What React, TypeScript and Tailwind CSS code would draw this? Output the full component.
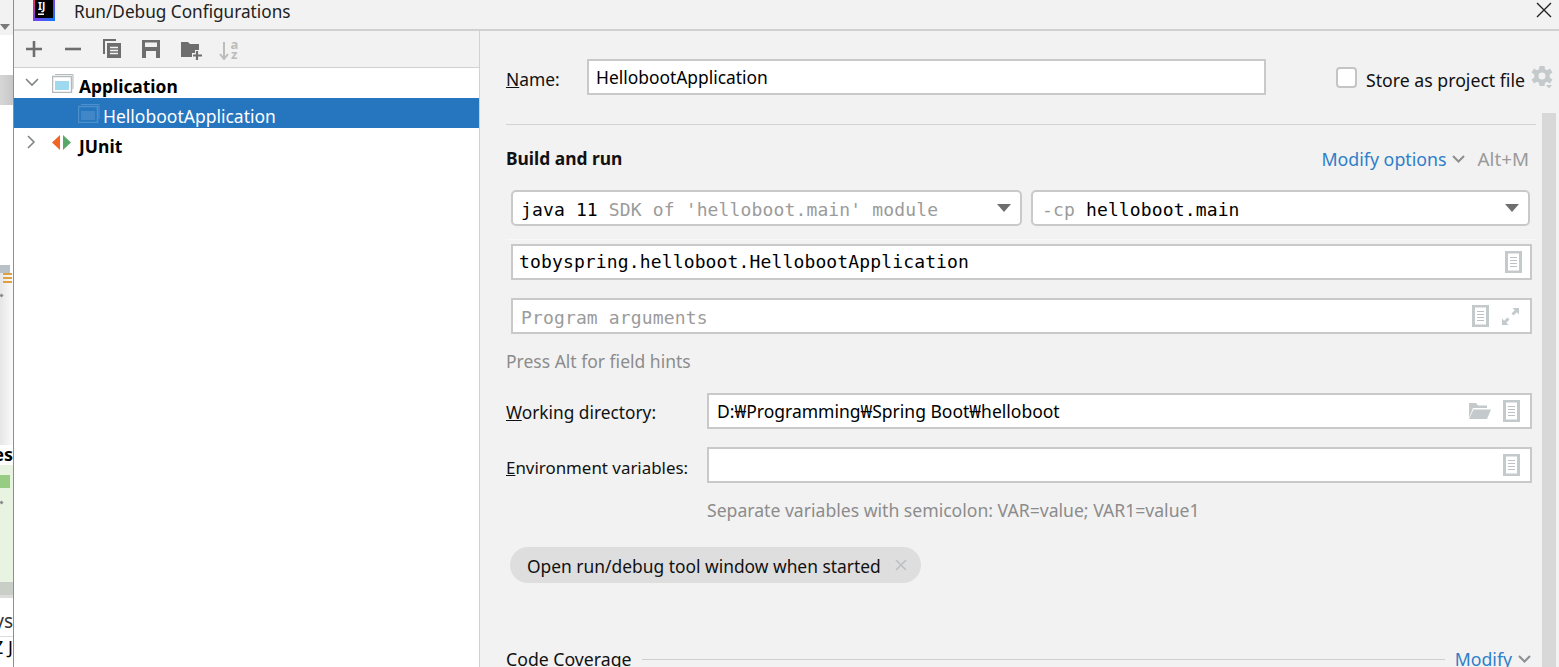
import React from "react";

const SANS = "font-['Noto_Sans','Open_Sans',sans-serif]";

function DocIcon() {
  return (
    <svg width="17" height="22" viewBox="0 0 17 22" className="shrink-0">
      <rect x="0" y="0" width="17" height="22" fill="#c4c9cc" />
      <rect x="3" y="2.5" width="11" height="17" fill="#fff" />
      <path d="M5 6.5h7M5 9.5h7M5 12.5h7M5 15.5h7" stroke="#bcc1c4" strokeWidth="1.2" />
    </svg>
  );
}

function Expand() {
  return (
    <svg width="19" height="19" viewBox="0 0 19 19" className="shrink-0">
      <path d="M1 18V11.5L3.2 13.7 6.5 10.5 8.5 12.5 5.3 15.8 7.5 18Z" fill="#c4c9cc" />
      <path d="M18 1V7.5L15.8 5.3 12.5 8.5 10.5 6.5 13.7 3.2 11.5 1Z" fill="#c4c9cc" />
    </svg>
  );
}

function Folder() {
  return (
    <svg width="23" height="18" viewBox="0 0 23 18" className="shrink-0">
      <path d="M1 16V1H8L10 3.5H19V6H5Z" fill="#c4c9cc" />
      <path d="M5.5 7.5H23L19 17H1Z" fill="#c4c9cc" />
    </svg>
  );
}

function Triangle() {
  return (
    <svg width="14" height="8" viewBox="0 0 14 8" className="shrink-0">
      <path d="M0 0H14L7 8Z" fill="#6e6e6e" />
    </svg>
  );
}

function Chevron({ color = "#8c8f91" }: { color?: string }) {
  return (
    <svg width="13" height="8" viewBox="0 0 13 8" className="shrink-0">
      <path d="M1 1L6.5 6.5 12 1" fill="none" stroke={color} strokeWidth="2" />
    </svg>
  );
}

function AppIcon({ dim = false }: { dim?: boolean }) {
  const edge = dim ? "#4d8fcb" : "#b4b9bc";
  const fill = dim ? "#4187c8" : "#9ed9f0";
  return (
    <svg width="22" height="20" viewBox="0 0 22 20" className="shrink-0">
      <path d="M3 1.5H21V16" fill="none" stroke={edge} strokeWidth="1" />
      <rect x="0.5" y="3.5" width="19" height="16" fill={dim ? "none" : "#fff"} stroke={edge} strokeWidth="1.5" />
      <rect x="3" y="8" width="14" height="9" fill={fill} />
    </svg>
  );
}

function LeftStrip() {
  return (
    <div className="w-[13px] h-[667px] shrink-0 flex flex-col overflow-hidden bg-[#f0f0f0]">
      <div className="h-[35px] bg-[#f2f2f2] flex items-end justify-start pb-[5px]">
        <div className="w-[10px] h-[6px] bg-[#7a7a7a] [clip-path:polygon(0_0,100%_0,50%_100%)]" />
      </div>
      <div className="h-[40px] bg-white" />
      <div className="h-[30px] bg-gradient-to-r from-[#d6d6d6] to-[#c8c8c8]" />
      <div className="h-[160px] bg-white" />
      <div className="h-[8px] bg-white">
        <div className="h-full w-[10px] bg-[#b9c1c8]" />
      </div>
      <div className="h-[172px] bg-gradient-to-r from-[#e6e6e6] to-[#fbfbfb] flex flex-col">
        <div className="flex flex-col gap-[2px] self-end mr-[1px]">
          <div className="w-[9px] h-[2px] bg-[#e0a040]" />
          <div className="w-[9px] h-[2px] bg-[#e0a040]" />
          <div className="w-[9px] h-[2px] bg-[#e0a040]" />
        </div>
        <div className="mt-[11px] w-[3px] h-[3px] bg-[#8a8a8a] rotate-45" />
      </div>
      <div className="h-[20px] bg-white font-['Noto_Sans',sans-serif] font-bold text-[18px] leading-[18px] text-black flex justify-end whitespace-nowrap">
        es
      </div>
      <div className="h-[117px] bg-[#e8f3e2] flex flex-col">
        <div className="mt-[10px] h-[13px] w-[10px] bg-[#97cc83]" />
        <div className="mt-[13px] w-[3px] h-[3px] bg-[#8a8a8a] rotate-45" />
      </div>
      <div className="h-[13px] bg-[#c9cec6]" />
      <div className="h-[3px] bg-[#dcdcdc]" />
      <div className="h-[12px] bg-white" />
      <div className="h-[27px] bg-white text-[19px] leading-[22px] text-[#333] font-['Noto_Sans',sans-serif] flex justify-end whitespace-nowrap border-b border-[#ddd]">
        ys
      </div>
      <div className="h-[30px] bg-white text-[18px] leading-[20px] text-black font-['Noto_Sans',sans-serif] flex justify-end whitespace-nowrap">
        Z J
      </div>
    </div>
  );
}

function Toolbar() {
  const c = "#6e6e6e";
  return (
    <div className="h-[37px] shrink-0 flex items-center pl-[12px] border-b border-[#d1d1d1] bg-[#f2f2f2]">
      <svg width="16" height="16" viewBox="0 0 16 16" className="shrink-0"><path d="M8 0V16M0 8H16" stroke={c} strokeWidth="2.6" /></svg>
      <svg width="16" height="16" viewBox="0 0 16 16" className="shrink-0 ml-[23px]"><path d="M0 8H16" stroke={c} strokeWidth="2.6" /></svg>
      <svg width="18" height="20" viewBox="0 0 18 20" className="shrink-0 ml-[22px]">
        <path d="M1 15V1H13" fill="none" stroke={c} strokeWidth="2" />
        <rect x="4" y="4" width="14" height="15" fill={c} />
        <path d="M7 8.5H15M7 11.5H15M7 14.5H15" stroke="#f2f2f2" strokeWidth="1.3" />
      </svg>
      <svg width="18" height="18" viewBox="0 0 18 18" className="shrink-0 ml-[21px]">
        <path fillRule="evenodd" d="M0 0H18V18H0ZM3 2.5V7H15V2.5ZM4 11V18H14V11Z" fill={c} />
      </svg>
      <svg width="21" height="20" viewBox="0 0 21 20" className="shrink-0 ml-[21px] mt-[2px]">
        <path d="M0 2H7L9 4H18V10H14V13H11V17H0Z" fill={c} />
        <path d="M16 11V20M12 15.5H21" stroke={c} strokeWidth="2.2" />
      </svg>
      <svg width="20" height="21" viewBox="0 0 20 21" className="shrink-0 ml-[17px]">
        <path d="M5 3V20M1 15L5 20 9 15" fill="none" stroke="#bcbcbc" strokeWidth="2" />
        <text x="11.5" y="9.5" fontSize="13" fontWeight="700" fill="#bcbcbc" fontFamily="Noto Sans">a</text>
        <text x="12" y="20" fontSize="13" fontWeight="700" fill="#bcbcbc" fontFamily="Noto Sans">z</text>
      </svg>
    </div>
  );
}

function Sidebar() {
  return (
    <div className="w-[466px] shrink-0 flex flex-col border-r border-[#d1d1d1] bg-white">
      <Toolbar />
      <div className="flex-1 flex flex-col bg-white">
        <div className="h-[30px] flex items-center">
          <svg width="14" height="9" viewBox="0 0 14 9" className="ml-[11px] mb-[2px] shrink-0"><path d="M1 1L7 7 13 1" fill="none" stroke="#7f8486" strokeWidth="1.6" /></svg>
          <span className="ml-[13px] mb-[1px]"><AppIcon /></span>
          <span className="ml-[5px] mt-[6px] text-[17.4px] font-bold text-black">Application</span>
        </div>
        <div className="h-[30px] flex items-center bg-[#2675bf]">
          <span className="ml-[64px] mb-[1px]"><AppIcon dim /></span>
          <span className="ml-[3px] mt-[6px] text-[17.5px] text-white">HellobootApplication</span>
        </div>
        <div className="h-[30px] flex items-center">
          <svg width="9" height="14" viewBox="0 0 9 14" className="ml-[13px] mb-[2px] shrink-0"><path d="M1 1L7 7 1 13" fill="none" stroke="#7f8486" strokeWidth="1.6" /></svg>
          <span className="ml-[16px] mb-[1px]">
            <svg width="19" height="15" viewBox="0 0 19 15"><path d="M8 0V15L0 7.5Z" fill="#f26522" /><path d="M11 0V15L19 7.5Z" fill="#59a869" /></svg>
          </span>
          <span className="ml-[8px] mt-[6px] text-[17.5px] font-bold text-black">JUnit</span>
        </div>
      </div>
    </div>
  );
}

function Field({ children, className = "" }: { children?: React.ReactNode; className?: string }) {
  return (
    <div className={`h-[36px] bg-white border-2 border-[#c9c9c9] flex items-center ${className}`}>{children}</div>
  );
}

const MONO = "font-['DejaVu_Sans_Mono',monospace] text-[18px] tracking-[0.14px] whitespace-pre";

function Form() {
  return (
    <div className="flex-1 min-w-0 flex flex-col bg-[#f2f2f2]">
      <div className="h-[64px] shrink-0 flex items-end pl-[26px]">
        <div className="h-[36px] flex items-center w-full">
          <span className="w-[81px] pt-[4px] text-[17.4px] text-[#111]"><u>N</u>ame:</span>
          <div className="w-[679px] h-[36px] bg-white border-2 border-[#c9c9c9] flex items-center pl-[7px] pt-[1px] text-[17.4px] text-black">HellobootApplication</div>
          <div className="ml-[70px] w-[21px] h-[21px] bg-white border-2 border-[#c4c4c4] rounded-[4px]" />
          <span className="ml-[9px] pt-[6px] text-[17.7px] text-[#111] whitespace-nowrap">Store as project file</span>
          <svg width="22" height="24" viewBox="0 0 22 24" className="ml-[6px]">
            <path fillRule="evenodd" d="M8.5 1H13.5L14 4.2 16.2 5.2 19 3.6 21.4 7.6 18.7 9.5V12.5L21.4 14.4 19 18.4 16.2 16.8 14 17.8 13.5 21H8.5L8 17.8 5.8 16.8 3 18.4.6 14.4 3.3 12.5V9.5L.6 7.6 3 3.6 5.8 5.2 8 4.2ZM11 7.5A3.5 3.5 0 1 0 11 14.5 3.5 3.5 0 0 0 11 7.5Z" fill="#c4c9cc" />
            <path d="M15 20H21L18 23.5Z" fill="#c4c9cc" />
          </svg>
        </div>
      </div>
      <div className="flex-1 min-h-0 flex">
        <div className="flex-1 min-w-0 flex flex-col pl-[26px] pr-[6px]">
          <div className="h-[29px] shrink-0" />
          <div className="h-[1px] shrink-0 bg-[#d3d3d3]" />
          <div className="h-[28px] shrink-0 mt-[20px] flex items-center">
            <span className="pb-[2px] text-[17.4px] font-bold text-[#111]">Build and run</span>
            <span className="ml-auto text-[17.8px] text-[#2f7ec9]">Modify options</span>
            <span className="ml-[5px]"><Chevron /></span>
            <span className="ml-[13px] mr-[7px] text-[18.8px] text-[#9a9a9a]">Alt+M</span>
          </div>
          <div className="h-[36px] shrink-0 mt-[17px] ml-[5px] mr-[6px] flex gap-[9px]">
            <div className="w-[511px] h-[36px] bg-white border-2 border-[#c9c9c9] rounded-[5px] flex items-center pl-[8px] pr-[9px]">
              <span className={`${MONO} pt-[2px]`}><span className="text-black">java 11</span><span className="text-[#9b9b9b]"> SDK of 'helloboot.main' module</span></span>
              <span className="ml-auto"><Triangle /></span>
            </div>
            <div className="flex-1 h-[36px] bg-white border-2 border-[#c9c9c9] rounded-[5px] flex items-center pl-[9px] pr-[9px]">
              <span className={`${MONO} pt-[2px]`}><span className="text-[#9b9b9b]">-cp </span><span className="text-black">helloboot.main</span></span>
              <span className="ml-auto"><Triangle /></span>
            </div>
          </div>
          <div className="h-[1px] shrink-0 mt-[13px] bg-[#f8f8f8]" />
          <div className="ml-[5px] mr-[4px] mt-[4px] shrink-0 flex flex-col">
            <Field className="pl-[6px] pr-[8px]">
              <span className={`${MONO} text-black pb-[2px]`}>tobyspring.helloboot.HellobootApplication</span>
              <span className="ml-auto"><DocIcon /></span>
            </Field>
            <Field className="mt-[18px] pl-[8px] pr-[10px]">
              <span className={`${MONO} text-[#9b9b9b] pt-[2px]`}>Program arguments</span>
              <span className="ml-auto"><DocIcon /></span>
              <span className="ml-[12px]"><Expand /></span>
            </Field>
          </div>
          <div className="h-[27px] shrink-0 mt-[14px] flex items-center text-[17.5px] text-[#8c8c8c]">Press Alt for field hints</div>
          <div className="h-[36px] shrink-0 mt-[18px] flex items-center mr-[4px]">
            <span className="w-[201px] pt-[4px] text-[17.3px] text-[#111]"><u>W</u>orking directory:</span>
            <Field className="flex-1 pl-[8px] pr-[10px]">
              <span className="text-[17.5px] text-black whitespace-nowrap">D:₩Programming₩Spring Boot₩helloboot</span>
              <span className="ml-auto"><Folder /></span>
              <span className="ml-[12px]"><DocIcon /></span>
            </Field>
          </div>
          <div className="h-[36px] shrink-0 mt-[18px] flex items-center mr-[4px]">
            <span className="w-[201px] pt-[5px] text-[16.9px] text-[#111] whitespace-nowrap"><u>E</u>nvironment variables:</span>
            <Field className="flex-1 pr-[10px]">
              <span className="ml-auto"><DocIcon /></span>
            </Field>
          </div>
          <div className="h-[27px] shrink-0 mt-[14px] pl-[201px] flex items-center text-[17.6px] text-[#8c8c8c] whitespace-nowrap">Separate variables with semicolon: VAR=value; VAR1=value1</div>
          <div className="shrink-0 mt-[23px] ml-[4px] self-start h-[36px] rounded-full bg-[#dedede] flex items-center pl-[17px] pr-[14px]">
            <span className="pt-[3px] text-[17.4px] text-[#111] whitespace-nowrap">Open run/debug tool window when started</span>
            <svg width="12" height="12" viewBox="0 0 12 12" className="ml-[14px]"><path d="M1 1L11 11M11 1L1 11" stroke="#bcc0c2" strokeWidth="1.6" /></svg>
          </div>
          <div className="h-[28px] shrink-0 mt-[62px] flex items-center">
            <span className="text-[17.7px] text-[#111] whitespace-nowrap">Code Coverage</span>
            <div className="flex-1 h-[1px] bg-[#cfcfcf] mx-[10px]" />
            <span className="text-[17.7px] text-[#2f7ec9]">Modify</span>
            <span className="ml-[6px] mr-[5px]"><Chevron /></span>
          </div>
        </div>
        <div className="w-[14px] shrink-0 mt-[18px] bg-[#d8d8d8]" />
        <div className="w-[3px] shrink-0" />
      </div>
    </div>
  );
}

export default function App() {
  return (
    <div className={`w-[1559px] h-[667px] overflow-hidden flex bg-[#f2f2f2] ${SANS}`}>
      <LeftStrip />
      <div className="w-[1px] h-full shrink-0 bg-[#8e8e8e]" />
      <div className="flex-1 min-w-0 h-full flex flex-col">
        <div className="h-[31px] shrink-0 flex items-center bg-[#f2f2f2] border-b-2 border-[#d1d1d1]">
          <svg width="22" height="21" viewBox="0 0 22 21" className="ml-[19px] mb-[9px] shrink-0">
            <defs>
              <linearGradient id="ij" x1="0" y1="0" x2="1" y2="1">
                <stop offset="0" stopColor="#fe2857" />
                <stop offset="0.5" stopColor="#7b3ff2" />
                <stop offset="1" stopColor="#087cfa" />
              </linearGradient>
            </defs>
            <rect width="22" height="21" fill="url(#ij)" />
            <rect x="2" y="0" width="18" height="18" fill="#000" />
            <text x="5" y="9.5" fontSize="10" fontWeight="700" fill="#fff" fontFamily="Noto Sans">IJ</text>
            <rect x="5" y="13.5" width="6" height="1.5" fill="#fff" />
          </svg>
          <span className="ml-[19px] mb-[6px] text-[17.2px] text-[#222] whitespace-nowrap">Run/Debug Configurations</span>
          <svg width="16" height="16" viewBox="0 0 16 16" className="ml-auto mr-[7px] mb-[10px]"><path d="M1 1L15 15M15 1L1 15" stroke="#222" strokeWidth="1.4" /></svg>
        </div>
        <div className="flex-1 min-h-0 flex">
          <Sidebar />
          <Form />
        </div>
      </div>
    </div>
  );
}
